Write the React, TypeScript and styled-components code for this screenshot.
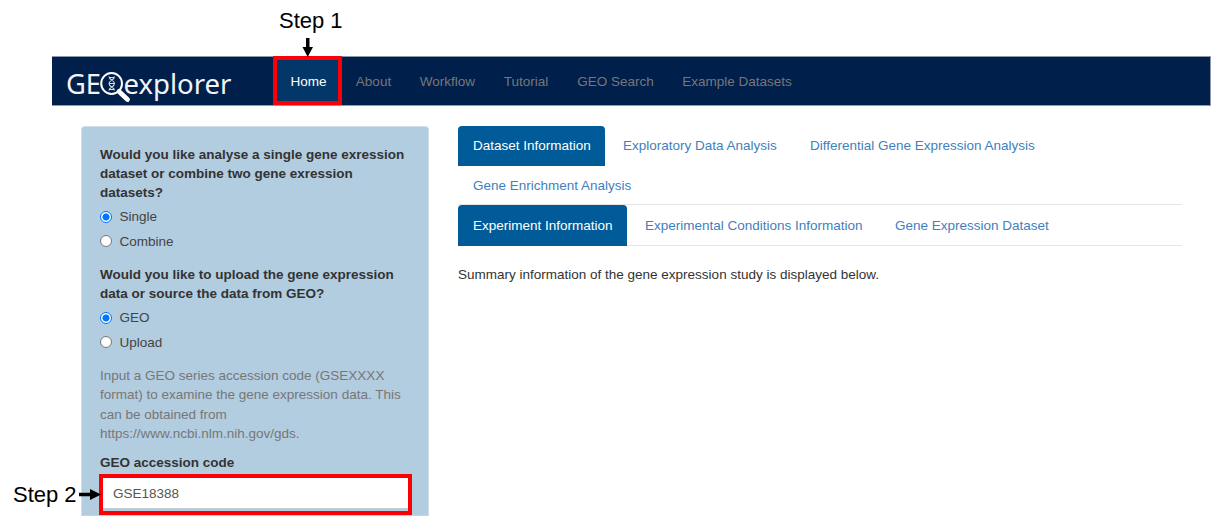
import React from "react";
import styled, { createGlobalStyle } from "styled-components";

const GlobalStyle = createGlobalStyle`
  *, *::before, *::after { box-sizing: border-box; }
  body { margin: 0; background: #fff; }
`;

const Page = styled.div`
  position: relative;
  width: 1212px;
  height: 521px;
  overflow: hidden;
  padding: 56px 1px 0 51px;
  font-family: "Liberation Sans", Arial, sans-serif;
  font-size: 13.5px;
  line-height: 19.3px;
  color: #333;
`;

const NavBar = styled.nav`
  display: flex;
  height: 50px;
  margin-left: 1px;
  background: #001f4b;
  border: 1px solid #8d99ad;
  border-left: 0;
`;

const Brand = styled.div`
  display: flex;
  align-items: flex-start;
  width: 225px;
  padding: 4px 0 0 15px;
`;

const NavItem = styled.a<{ $active?: boolean; $width: number }>`
  display: flex;
  align-items: center;
  justify-content: center;
  width: ${(p) => p.$width}px;
  padding-top: 1px;
  white-space: nowrap;
  color: ${(p) => (p.$active ? "#fff" : "#777")};
  background: ${(p) => (p.$active ? "#043769" : "transparent")};
`;

const HomeFrame = styled.span`
  position: absolute;
  left: 273px;
  top: 56px;
  width: 69px;
  height: 49px;
  border: 4px solid #fb0007;
`;

const Content = styled.main`
  display: flex;
  align-items: flex-start;
  padding: 20px 29px 0 30px;
`;

const Sidebar = styled.form`
  width: 348px;
  height: 390px;
  padding: 17.5px 17px 0 18px;
  background: #b2cce0;
  border: 1px solid #d3dfe8;
  border-bottom-color: #c3d5e3;
  border-radius: 4px 4px 0 0;
`;

const Question = styled.div`
  font-weight: 700;
  white-space: nowrap;
`;

const Options = styled.div`
  display: flex;
  flex-direction: column;
  gap: 4.9px;
  margin: 5px 0 14px;
`;

const Option = styled.label`
  display: flex;
  align-items: center;
  gap: 7.5px;
  height: 19.3px;
  color: #444;
`;

const Radio = styled.span<{ $checked?: boolean }>`
  width: 12px;
  height: 12px;
  border-radius: 50%;
  border: 1px solid ${(p) => (p.$checked ? "#0075ff" : "#767676")};
  background: ${(p) => (p.$checked ? "radial-gradient(circle, #0075ff 3.2px, #fff 3.9px)" : "#fff")};
`;

const Help = styled.p`
  margin: 0 0 9.5px;
  white-space: nowrap;
  color: #777;
`;

const InputFrame = styled.div`
  width: 313px;
  height: 41px;
  margin: 2px 0 0 -1px;
  border: 4px solid #fb0007;
`;

const TextField = styled.div`
  height: 31px;
  padding: 6px 10px 0;
  background: #fff;
  border-bottom: 1px solid #c4ccd2;
  color: #555;
`;

const Results = styled.section`
  width: 724px;
  margin-left: 29px;
`;

const Tabs = styled.div<{ $height: number }>`
  display: flex;
  flex-wrap: wrap;
  align-content: flex-start;
  column-gap: 3px;
  height: ${(p) => p.$height}px;
  border-bottom: 1px solid #e6e6e6;
`;

const Tab = styled.a<{ $active?: boolean; $width: number; $tall?: boolean }>`
  width: ${(p) => p.$width}px;
  height: ${(p) => (p.$tall ? 41 : 40)}px;
  padding: ${(p) => (p.$tall ? 11 : 10)}px 15px 0;
  white-space: nowrap;
  border-radius: 4px 4px 0 0;
  color: ${(p) => (p.$active ? "#fff" : "#3f7fbd")};
  background: ${(p) => (p.$active ? "#005b98" : "transparent")};
`;

const Summary = styled.p`
  margin: 18.5px 0 0;
  white-space: nowrap;
`;

const Callout = styled.div<{ $x: number; $y: number }>`
  position: absolute;
  left: ${(p) => p.$x}px;
  top: ${(p) => p.$y}px;
  font-size: 22px;
  line-height: 26px;
  white-space: nowrap;
  color: #000;
`;

const Arrow = styled.svg<{ $x: number; $y: number }>`
  position: absolute;
  left: ${(p) => p.$x}px;
  top: ${(p) => p.$y}px;
`;

const Logo = () => (
  <svg width="172" height="44" viewBox="0 0 172 44" fill="none">
    <g fill="#f2f4f7" fontFamily="'Noto Sans', sans-serif" fontSize="27">
      <text x="-1" y="32.5" textLength="35" lengthAdjust="spacingAndGlyphs">GE</text>
      <text x="56.5" y="32.5" textLength="108" lengthAdjust="spacingAndGlyphs">explorer</text>
    </g>
    <circle cx="44.6" cy="22.5" r="10.4" stroke="#fff" strokeWidth="2" />
    <path d="M52 30.5 60.5 38.5" stroke="#fff" strokeWidth="4.8" strokeLinecap="round" />
    <path
      d="M42 15.5c0 3.7 5.500 3.500 5.500 7s-5.500 3.500-5.500 7M47.500 15.500c0 3.700-5.500 3.500-5.500 7s5.500 3.500 5.500 7M42 16.500h5.500M42 22.500h5.500M42 28.500h5.500"
      stroke="#d5dbe5"
      strokeWidth="1.1"
    />
  </svg>
);

export default function App() {
  return (
    <>
      <GlobalStyle />
      <Page>
        <NavBar>
          <Brand><Logo /></Brand>
          <NavItem $active $width={63}>Home</NavItem>
          <NavItem $width={67}>About</NavItem>
          <NavItem $width={81}>Workflow</NavItem>
          <NavItem $width={76}>Tutorial</NavItem>
          <NavItem $width={103}>GEO Search</NavItem>
          <NavItem $width={140}>Example Datasets</NavItem>
        </NavBar>
        <Content>
          <Sidebar>
            <Question>
              Would you like analyse a single gene exression<br />
              dataset or combine two gene exression<br />
              datasets?
            </Question>
            <Options>
              <Option><Radio $checked />Single</Option>
              <Option><Radio />Combine</Option>
            </Options>
            <Question>
              Would you like to upload the gene expression<br />
              data or source the data from GEO?
            </Question>
            <Options>
              <Option><Radio $checked />GEO</Option>
              <Option><Radio />Upload</Option>
            </Options>
            <Help>
              Input a GEO series accession code (GSEXXXX<br />
              format) to examine the gene expression data. This<br />
              can be obtained from<br />
              https://www.ncbi.nlm.nih.gov/gds.
            </Help>
            <Question>GEO accession code</Question>
            <InputFrame><TextField>GSE18388</TextField></InputFrame>
          </Sidebar>
          <Results>
            <Tabs $height={79}>
              <Tab $active $width={147}>Dataset Information</Tab>
              <Tab $width={184}>Exploratory Data Analysis</Tab>
              <Tab $width={256}>Differential Gene Expression Analysis</Tab>
              <Tab $width={188}>Gene Enrichment Analysis</Tab>
            </Tabs>
            <Tabs $height={41}>
              <Tab $active $tall $width={169}>Experiment Information</Tab>
              <Tab $tall $width={247}>Experimental Conditions Information</Tab>
              <Tab $tall $width={184}>Gene Expression Dataset</Tab>
            </Tabs>
            <Summary>Summary information of the gene expression study is displayed below.</Summary>
          </Results>
        </Content>
        <HomeFrame />
        <Callout $x={279} $y={8}>Step 1</Callout>
        <Arrow $x={301} $y={38} width="13" height="20" viewBox="0 0 13 20">
          <path d="M5 0h3.500v9H12L6.700 19 1.500 9H5z" fill="#000" />
        </Arrow>
        <Callout $x={13} $y={482}>Step 2</Callout>
        <Arrow $x={79} $y={488} width="23" height="13" viewBox="0 0 23 13">
          <path d="M0 4.800v3.400h11V12l11-5.500L11 1v3.800z" fill="#000" />
        </Arrow>
      </Page>
    </>
  );
}
